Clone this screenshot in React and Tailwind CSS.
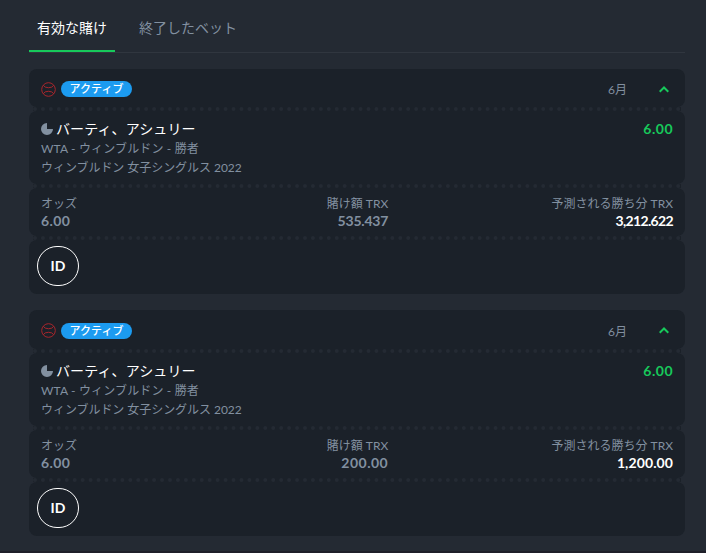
const bets = [
  { id: 1, stake: '535.437', stakeClass: '-tracking-[0.2px]', win: '3,212.622', winClass: '-tracking-[0.65px]' },
  { id: 2, stake: '200.00', stakeClass: 'tracking-[0.5px]', win: '1,200.00', winClass: 'tracking-[0.1px]' },
]

function BallIcon() {
  return (
    <svg width="15" height="15" viewBox="0 0 15 15" fill="none" stroke="#a8262c" strokeWidth="1">
      <circle cx="7.5" cy="7.5" r="6.8" />
      <path d="M2.2 3.2 4.2 5.1Q7.5 6.4 10.8 5.1L12.8 3.2M2.2 11.8 4.2 9.9Q7.5 8.6 10.8 9.9L12.8 11.8" />
    </svg>
  )
}

function PendingIcon() {
  return (
    <svg width="12" height="12" viewBox="0 0 12 12" fill="#8290a0">
      <path d="M6 0v6h6A6 6 0 1 1 6 0z" />
    </svg>
  )
}

function Divider() {
  return <div className="mx-1 border-t-4 border-dotted border-[#242a33] bg-[#1b2129]" />
}

function BetCard({ bet }) {
  return (
    <div>
      <div className="flex h-[38.4px] items-center rounded-t-lg rounded-b-lg bg-[#1b2129] px-3 pt-0.5">
        <BallIcon />
        <span className="ml-[5px] h-4 w-[71px] rounded-full bg-[#1c9bf0] text-center text-[11px] leading-4 font-medium text-white">アクティブ</span>
        <span className="ml-auto pt-0.5 text-xs">6月</span>
        <svg className="mr-1 ml-8" width="10" height="7" viewBox="0 0 10 7" fill="none" stroke="#17c95b" strokeWidth="2">
          <path d="M.7 5.8 5 1.5l4.3 4.3" />
        </svg>
      </div>
      <Divider />
      <div className="flex h-[73px] justify-between rounded-lg bg-[#1b2129] px-3 pt-2">
        <div className="text-xs leading-[19px]">
          <div className="flex items-center gap-[3px] text-sm leading-5 tracking-[0.1px] text-white">
            <PendingIcon />
            バーティ、アシュリー
          </div>
          <div className="tracking-[0.15px]">WTA - ウィンブルドン - 勝者</div>
          <div className="-tracking-[0.05px]">ウィンブルドン 女子シングルス 2022</div>
        </div>
        <div className="text-sm leading-5 font-bold tracking-[0.5px] text-[#17c95b]">6.00</div>
      </div>
      <Divider />
      <div className="grid h-12 grid-cols-3 rounded-lg bg-[#1b2129] px-3 pt-[7px] text-xs leading-[18px]">
        <div>
          <div>オッズ</div>
          <div className="-mt-px text-sm leading-[17px] font-bold tracking-[0.4px]">6.00</div>
        </div>
        <div className="justify-self-center pl-px text-right">
          <div>賭け額 TRX</div>
          <div className={`-mt-px text-sm leading-[17px] font-bold ${bet.stakeClass}`}>{bet.stake}</div>
        </div>
        <div className="text-right">
          <div>予測される勝ち分 TRX</div>
          <div className={`-mt-px text-sm leading-[17px] font-bold text-white ${bet.winClass}`}>{bet.win}</div>
        </div>
      </div>
      <Divider />
      <div className="h-[54px] rounded-lg bg-[#1b2129] px-2 pt-1.5">
        <button className="block h-10 w-[42px] rounded-full border border-white text-sm font-bold text-white">ID</button>
      </div>
    </div>
  )
}

export default function App() {
  return (
    <div className="h-[553px] overflow-hidden border-b-2 border-[#1e1f29] bg-[#242a33] pr-[21px] pl-[29px] font-[Lato,'Noto_Sans_CJK_JP',sans-serif] text-[#8290a0]">
      <div className="flex h-[53px] gap-4 border-b border-[#30363f] text-sm">
        <button className="h-[52px] border-b-2 border-[#17c95b] px-2 pt-1.5 text-white">有効な賭け</button>
        <button className="h-[52px] border-b-2 border-transparent px-2 pt-1.5">終了したベット</button>
      </div>
      <div className="mt-4 space-y-4">
        {bets.map(bet => <BetCard key={bet.id} bet={bet} />)}
      </div>
    </div>
  )
}
